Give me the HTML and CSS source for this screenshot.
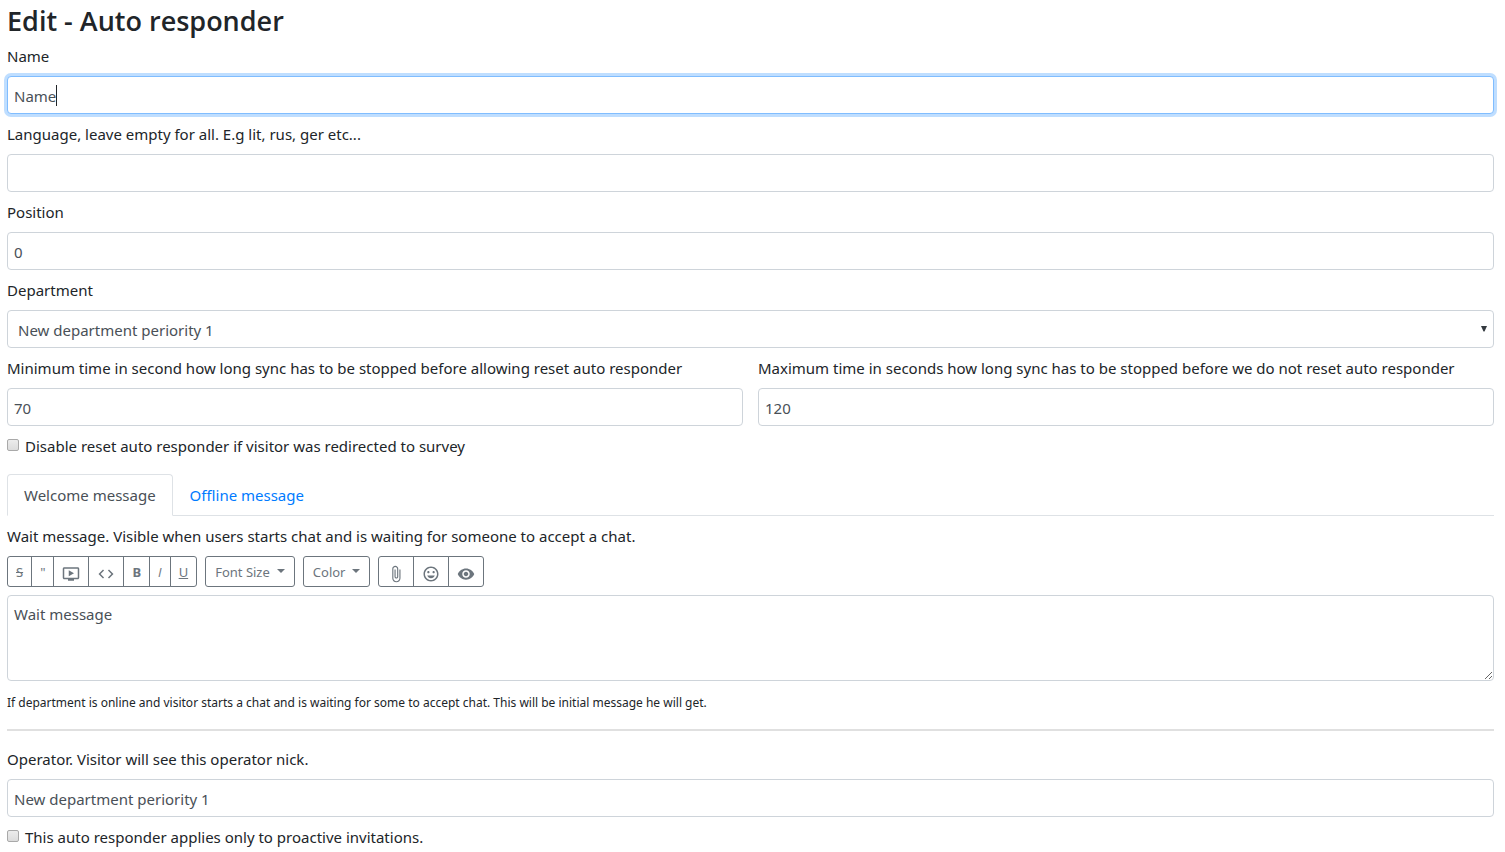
FILE: index.html
```html
<!DOCTYPE html>
<html lang="en">
<head>
<meta charset="utf-8">
<meta name="viewport" content="width=device-width, initial-scale=1">
<title>Edit - Auto responder</title>
<link rel="stylesheet" href="styles.css">
</head>
<body>
<form class="page">
  <h1 class="title">Edit - Auto responder</h1>

  <div class="field">
    <label for="name">Name</label>
    <div class="caret-box">
      <input class="control focused" id="name" type="text" value="Name">
      <span class="caret" aria-hidden="true"></span>
    </div>
  </div>
  <div class="field">
    <label for="lang">Language, leave empty for all. E.g lit, rus, ger etc...</label>
    <input class="control" id="lang" type="text">
  </div>
  <div class="field">
    <label for="position">Position</label>
    <input class="control" id="position" type="text" value="0">
  </div>
  <div class="field">
    <label for="department">Department</label>
    <div class="select-box">
      <select class="control select" id="department"><option>New department periority 1</option></select>
      <svg class="arrow" viewBox="0 0 6 6" aria-hidden="true"><path d="M0 0h6L3.500 5.500h-1z"/></svg>
    </div>
  </div>

  <div class="columns">
    <div class="field">
      <label for="min">Minimum time in second how long sync has to be stopped before allowing reset auto responder</label>
      <input class="control" id="min" type="text" value="70">
    </div>
    <div class="field">
      <label for="max">Maximum time in seconds how long sync has to be stopped before we do not reset auto responder</label>
      <input class="control" id="max" type="text" value="120">
    </div>
  </div>

  <label class="check"><input type="checkbox">Disable reset auto responder if visitor was redirected to survey</label>

  <nav class="tabs">
    <a class="tab active" href="#welcome">Welcome message</a>
    <a class="tab" href="#offline">Offline message</a>
  </nav>

  <section id="welcome">
    <div class="field">
      <label for="wait">Wait message. Visible when users starts chat and is waiting for someone to accept a chat.</label>
      <div class="toolbar">
        <div class="group">
          <button class="btn" type="button"><s>S</s></button>
          <button class="btn" type="button">"</button>
          <button class="btn" type="button" aria-label="Video"><svg class="icon" viewBox="0 0 24 24"><path d="M21 3H3c-1.11 0-2 .89-2 2v12c0 1.1.89 2 2 2h5v2h8v-2h5c1.1 0 1.99-.9 1.99-2L23 5c0-1.11-.9-2-2-2zm0 14H3V5h18v12zm-5-6l-7 4V7z"/></svg></button>
          <button class="btn" type="button" aria-label="Code"><svg class="icon" viewBox="0 0 24 24"><path d="M9.4 16.6L4.8 12l4.6-4.6L8 6l-6 6 6 6 1.4-1.4zm5.2 0l4.6-4.6-4.6-4.6L16 6l6 6-6 6-1.4-1.4z"/></svg></button>
          <button class="btn" type="button"><b>B</b></button>
          <button class="btn" type="button"><i>I</i></button>
          <button class="btn" type="button"><u>U</u></button>
        </div>
        <button class="btn drop" type="button">Font Size</button>
        <button class="btn drop" type="button">Color</button>
        <div class="group">
          <button class="btn" type="button" aria-label="Attach file"><svg class="icon" viewBox="0 0 24 24"><path d="M16.5 6v11.5c0 2.21-1.79 4-4 4s-4-1.79-4-4V5c0-1.38 1.12-2.5 2.5-2.5s2.5 1.12 2.5 2.5v10.5c0 .55-.45 1-1 1s-1-.45-1-1V6H10v9.500c0 1.380 1.120 2.500 2.500 2.500s2.500-1.120 2.500-2.500V5c0-2.210-1.790-4-4-4S7 2.790 7 5v12.500c0 3.040 2.460 5.500 5.500 5.500s5.500-2.460 5.500-5.500V6h-1.500z"/></svg></button>
          <button class="btn" type="button" aria-label="Smileys"><svg class="icon" viewBox="0 0 24 24"><path d="M11.990 2C6.470 2 2 6.480 2 12s4.470 10 9.990 10C17.520 22 22 17.520 22 12S17.520 2 11.990 2zM12 20c-4.420 0-8-3.580-8-8s3.580-8 8-8 8 3.580 8 8-3.580 8-8 8zm3.500-9c.830 0 1.500-.670 1.500-1.500S16.330 8 15.500 8 14 8.670 14 9.500s.670 1.500 1.500 1.500zm-7 0c.830 0 1.500-.670 1.500-1.500S9.330 8 8.500 8 7 8.670 7 9.500 7.670 11 8.500 11zM6.900 14c.8 2.050 2.770 3.500 5.100 3.500s4.300-1.450 5.100-3.500z"/></svg></button>
          <button class="btn" type="button" aria-label="Preview"><svg class="icon" viewBox="0 0 24 24"><path d="M12 4.500C7 4.500 2.730 7.610 1 12c1.730 4.390 6 7.500 11 7.500s9.270-3.110 11-7.500c-1.730-4.390-6-7.500-11-7.500zM12 17c-2.760 0-5-2.240-5-5s2.240-5 5-5 5 2.240 5 5-2.240 5-5 5zm0-8c-1.660 0-3 1.340-3 3s1.340 3 3 3 3-1.340 3-3-1.340-3-3-3z"/></svg></button>
        </div>
      </div>
      <textarea class="control area" id="wait" rows="3">Wait message</textarea>
      <p class="hint">If department is online and visitor starts a chat and is waiting for some to accept chat. This will be initial message he will get.</p>
    </div>
    <hr class="rule">
    <div class="field">
      <label for="operator">Operator. Visitor will see this operator nick.</label>
      <input class="control" id="operator" type="text" value="New department periority 1">
    </div>
    <label class="check"><input type="checkbox">This auto responder applies only to proactive invitations.</label>
  </section>
</form>
</body>
</html>
```
FILE: styles.css
```css
* { box-sizing: border-box; }

body {
  margin: 0;
  background: #fff;
  color: #212529;
  font: 15px/24px "Noto Sans", "Open Sans", sans-serif;
}

.page { padding: 4px 11px 0 7px; }

.title {
  margin: 0 0 6px;
  font: 600 27px/34px "Open Sans", "Noto Sans", sans-serif;
}

.field { margin-bottom: 8px; }
.field > label { display: block; margin-bottom: 8px; }

.control {
  display: block;
  width: 100%;
  height: 38px;
  margin: 0;
  padding: 7px 6px 5px;
  border: 1px solid #ced4da;
  border-radius: 4px;
  outline: 0;
  background: #fff;
  color: #495057;
  font: inherit;
}

.focused, .control:focus {
  border-color: #80bdff;
  box-shadow: 0 0 0 3px #bfdeff;
}

.caret-box, .select-box { position: relative; }

.caret {
  position: absolute;
  top: 9px;
  left: 49px;
  width: 1px;
  height: 21px;
  background: #212529;
}

.select { appearance: none; padding-left: 10px; }

.arrow {
  position: absolute;
  top: 16px;
  right: 7px;
  width: 6px;
  height: 6px;
  fill: #343a40;
}

.columns {
  display: grid;
  grid-template-columns: 1fr 1fr;
  gap: 15px;
}

.check { display: flex; align-items: center; gap: 6px; }

.check input {
  appearance: none;
  width: 12px;
  height: 12px;
  margin: 0 0 2px;
  border: 1px solid #a9a9a9;
  border-radius: 2px;
  background: linear-gradient(#ececec, #dcdcdc);
}

.tabs {
  display: flex;
  margin: 16px 0 8px;
  border-bottom: 1px solid #dee2e6;
}

.tab {
  margin-bottom: -1px;
  padding: 8px 16px;
  border: 1px solid transparent;
  border-radius: 4px 4px 0 0;
  color: #007bff;
  text-decoration: none;
}

.tab.active {
  border-color: #dee2e6 #dee2e6 #fff;
  background: #fff;
  color: #495057;
}

.toolbar { display: flex; gap: 8px; margin-bottom: 8px; }
.group { display: flex; }

.btn {
  display: flex;
  align-items: center;
  height: 31px;
  padding: 5px 8px 3px;
  border: 1px solid #6c757d;
  border-radius: 3px;
  background: #fff;
  color: #6c757d;
  font: 13px/21px "Noto Sans", "Open Sans", sans-serif;
}

.btn i { font-family: "Open Sans", "Noto Sans", sans-serif; }

.group .btn { border-radius: 0; }
.group .btn + .btn { margin-left: -1px; }
.group .btn:first-child { border-radius: 3px 0 0 3px; }
.group .btn:last-child { border-radius: 0 3px 3px 0; }

.icon {
  width: 18px;
  height: 18px;
  margin-top: 2px;
  fill: currentColor;
}

.drop { padding-left: 9px; padding-right: 9px; }

.drop::after {
  content: "";
  margin: 0 0 3px 7px;
  border: 4px solid transparent;
  border-top-color: currentColor;
  border-bottom: 0;
}

.area { height: 86px; padding: 6px; resize: vertical; }

.hint { margin: 10px 0 0; font-size: 12px; }

.rule {
  margin: 14px 0 16px;
  border: 0;
  border-top: 2px solid #e0e0e0;
}
```
